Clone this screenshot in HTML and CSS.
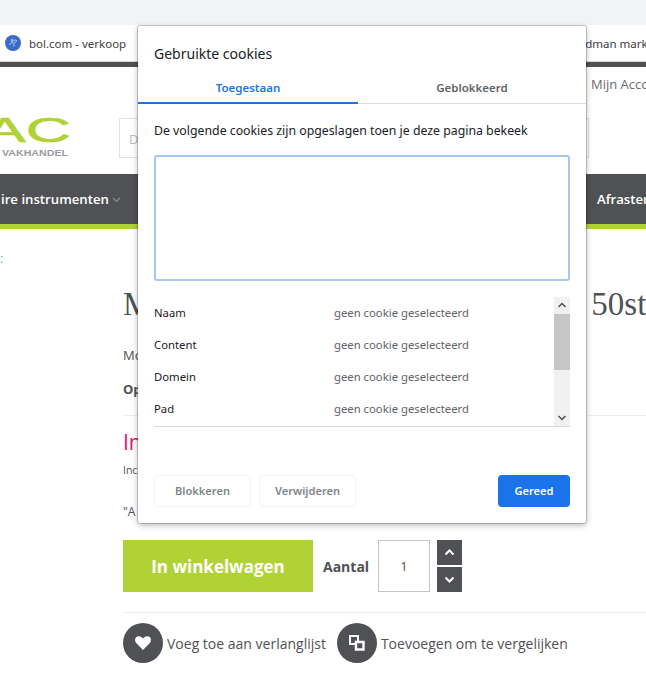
FILE: index.html
```html
<!DOCTYPE html>
<html lang="nl">
<head>
  <meta charset="UTF-8" />
  <meta name="viewport" content="width=device-width, initial-scale=1" />
  <title>Gebruikte cookies</title>
  <link rel="stylesheet" href="styles.css">
</head>
<body>

  <div class="browser-top"></div>

  <div class="bookmarks">
    <span class="bookmark-icon">
      <svg width="16" height="16" viewBox="0 0 16 16">
        <circle cx="8" cy="8" r="8" fill="#3a6bc9" />
        <path d="M4 9.500c2-.5 4-2.500 4-4.500 0-1-1.500-1-1.800 0C5.800 6.500 8 8 9 9.500c.6 1 0 2-1 1.800M8 6.500c1-1.500 3-2 3.500-1 .4 1-1 2-2.500 2.500" fill="none" stroke="#cfdcf5" stroke-width=".8" />
      </svg>
    </span>
    <span class="bookmark-name">bol.com - verkoop</span>
    <span class="bookmark-next">dman marketing</span>
  </div>
  <div class="dark-strip"></div>

  <header class="site-header">
    <div class="account">Mijn Account</div>
    <div class="header-row">
      <svg class="logo" width="74" height="44" viewBox="0 0 74 44">
        <text x="-16" y="25" class="logo-mark" textLength="87" lengthAdjust="spacingAndGlyphs">AC</text>
        <text x="2" y="39" class="logo-sub" textLength="66" lengthAdjust="spacingAndGlyphs">VAKHANDEL</text>
      </svg>
      <div class="search">D</div>
    </div>
  </header>

  <nav class="main-nav">
    <span class="nav-item">ire instrumenten
      <svg width="9" height="6" viewBox="0 0 9 6"><path d="M1 1l3.500 3.500L8 1" fill="none" stroke="#8c8d90" stroke-width="1.200" /></svg>
    </span>
    <span class="nav-item nav-last">Afrastering</span>
  </nav>

  <div class="crumbs">:</div>

  <main class="product">
    <h1 class="product-title"><span>M</span><span class="title-end">50st</span></h1>
    <p class="line-brand">Mo</p>
    <p class="line-option">Op</p>
    <hr class="rule rule-top">
    <p class="stock">In</p>
    <p class="stock-note">Inc</p>
    <p class="quote">"A</p>

    <div class="buy-row">
      <button class="cart-btn">In winkelwagen</button>
      <span class="qty-label">Aantal</span>
      <div class="qty-box">1</div>
      <div class="stepper">
        <button class="step-btn">
          <svg width="11" height="7" viewBox="0 0 11 7"><path d="M1.500 5.500l4-4 4 4" fill="none" stroke="#fff" stroke-width="2" /></svg>
        </button>
        <button class="step-btn">
          <svg width="11" height="7" viewBox="0 0 11 7"><path d="M1.500 1.500l4 4 4-4" fill="none" stroke="#fff" stroke-width="2" /></svg>
        </button>
      </div>
    </div>

    <hr class="rule rule-bottom">

    <div class="actions">
      <a class="action">
        <span class="action-icon">
          <svg width="16" height="14" viewBox="0 0 16 14"><path d="M8 14L1.400 7.300C-.4 5.400-.3 2.600 1.300 1.100 3 -.4 5.800-.2 8 2.400 10.200-.2 13-.4 14.700 1.100c1.600 1.500 1.700 4.300-.1 6.200z" fill="#fff" /></svg>
        </span>
        Voeg toe aan verlanglijst
      </a>
      <a class="action">
        <span class="action-icon">
          <svg width="16" height="16" viewBox="0 0 16 16">
            <path d="M1 1h8v8H1z" fill="none" stroke="#fff" stroke-width="2" />
            <path d="M6 6h9v9H6z" fill="#505155" />
            <path d="M7 7h7.500v7.500H7z" fill="none" stroke="#fff" stroke-width="2.400" />
          </svg>
        </span>
        Toevoegen om te vergelijken
      </a>
    </div>
  </main>

  <div class="dialog">
    <h2 class="dialog-title">Gebruikte cookies</h2>
    <div class="tabs">
      <div class="tab tab-active">Toegestaan</div>
      <div class="tab">Geblokkeerd</div>
    </div>
    <div class="dialog-body">
      <p class="intro">De volgende cookies zijn opgeslagen toen je deze pagina bekeek</p>
      <div class="cookie-tree"></div>
      <div class="details">
        <div class="details-rows">
          <div class="detail"><span class="detail-key">Naam</span><span class="detail-val">geen cookie geselecteerd</span></div>
          <div class="detail"><span class="detail-key">Content</span><span class="detail-val">geen cookie geselecteerd</span></div>
          <div class="detail"><span class="detail-key">Domein</span><span class="detail-val">geen cookie geselecteerd</span></div>
          <div class="detail"><span class="detail-key">Pad</span><span class="detail-val">geen cookie geselecteerd</span></div>
        </div>
        <div class="scrollbar">
          <svg class="scroll-arrow" width="16" height="17" viewBox="0 0 16 17"><path d="M4.500 10l3.500-3.500 3.500 3.500" fill="none" stroke="#505050" stroke-width="1.500" /></svg>
          <div class="scroll-thumb"></div>
          <div class="scroll-track"></div>
          <svg class="scroll-arrow" width="16" height="17" viewBox="0 0 16 17"><path d="M4.500 7l3.500 3.500L11.500 7" fill="none" stroke="#505050" stroke-width="1.500" /></svg>
        </div>
      </div>
      <div class="dialog-buttons">
        <button class="btn-plain">Blokkeren</button>
        <button class="btn-plain">Verwijderen</button>
        <button class="btn-done">Gereed</button>
      </div>
    </div>
  </div>

</body>
</html>
```

FILE: styles.css
```css
html, body {
  margin: 0;
  padding: 0;
}

body {
  position: relative;
  width: 646px;
  height: 676px;
  overflow: hidden;
  background: white;
  font-family: 'Open Sans', sans-serif;
  color: #505155;
}

p, h1, h2 {
  margin: 0;
  font-weight: normal;
}

button {
  font-family: inherit;
  cursor: pointer;
}

.browser-top {
  height: 25px;
  background: #f1f3f4;
}

.bookmarks {
  height: 36px;
  display: flex;
  align-items: center;
  padding-left: 5px;
  font-family: 'Noto Sans', sans-serif;
  font-size: 11.500px;
  color: #3c4043;
  white-space: nowrap;
  border-bottom: 1px solid #d6d6d6;
}

.bookmark-icon {
  display: flex;
  margin-right: 8px;
}

.bookmark-next {
  margin-left: 459px;
}

.dark-strip {
  height: 5px;
  background: #505155;
}

.site-header {
  height: 107px;
}

.account {
  padding: 8px 0 0 591px;
  font-size: 13px;
  line-height: 18px;
  white-space: nowrap;
  color: #6a6b6f;
}

.header-row {
  display: flex;
  align-items: flex-start;
  margin-top: 25px;
}

.logo {
  flex: none;
  margin-top: -1px;
  margin-right: 45px;
}

.logo-mark {
  font-family: 'Liberation Sans', sans-serif;
  font-size: 35px;
  fill: #b1d235;
  stroke: #b1d235;
  stroke-width: 0.6px;
}

.logo-sub {
  font-family: 'Liberation Sans', sans-serif;
  font-size: 9px;
  font-weight: 700;
  fill: #9a9b9e;
}

.search {
  width: 459px;
  height: 38px;
  padding-left: 9px;
  border: 1px solid #e2e2e2;
  font-size: 13px;
  line-height: 40px;
  color: #b9b9b9;
}

.main-nav {
  display: flex;
  align-items: center;
  justify-content: space-between;
  padding-left: 1px;
  padding-bottom: 1px;
  box-sizing: border-box;
  height: 55px;
  background: #505155;
  border-bottom: 5px solid #b1d235;
  color: white;
  font-size: 13.200px;
  font-weight: 600;
  white-space: nowrap;
}

.nav-item svg {
  vertical-align: 1px;
}

.nav-last {
  width: 49px;
  overflow: hidden;
}

.crumbs {
  height: 33px;
  padding-top: 22px;
  font-size: 12px;
  line-height: 16px;
  color: #4fb7b0;
}

.product {
  margin-left: 123px;
}

.product-title {
  display: flex;
  height: 40px;
  font-family: 'Liberation Serif', serif;
  font-size: 33px;
  line-height: 40px;
  white-space: nowrap;
  overflow: hidden;
}

.title-end {
  margin-left: 439px;
}

.line-brand {
  margin-top: 22px;
  font-size: 13px;
  line-height: 18px;
}

.line-option {
  margin-top: 16px;
  font-size: 13px;
  font-weight: 700;
  line-height: 18px;
}

.rule {
  height: 1px;
  margin: 0;
  border: none;
  background: #eeeeee;
}

.rule-top {
  margin-top: 17px;
}

.stock {
  margin-top: 11px;
  font-size: 21px;
  line-height: 30px;
  color: #e5126f;
}

.stock-note {
  margin-top: 6px;
  font-size: 10.500px;
  line-height: 14px;
}

.quote {
  margin-top: 27px;
  font-size: 12px;
  line-height: 16px;
}

.buy-row {
  display: flex;
  align-items: center;
  margin-top: 20px;
}

.cart-btn {
  width: 190px;
  height: 52px;
  border: none;
  background: #b1d235;
  color: white;
  font-size: 17px;
  font-weight: 700;
}

.qty-label {
  width: 55px;
  margin-left: 10px;
  font-size: 14px;
  font-weight: 700;
}

.qty-box {
  width: 50px;
  height: 50px;
  border: 1px solid #c4c4c4;
  font-size: 13px;
  line-height: 50px;
  text-align: center;
  color: #6b4a4d;
}

.stepper {
  display: flex;
  flex-direction: column;
  gap: 2px;
  margin-left: 7px;
}

.step-btn {
  width: 25px;
  height: 25px;
  padding: 0;
  display: flex;
  align-items: center;
  justify-content: center;
  border: none;
  background: #505155;
}

.rule-bottom {
  margin-top: 20px;
}

.actions {
  display: flex;
  gap: 11px;
  margin-top: 10px;
}

.action {
  display: flex;
  align-items: center;
  gap: 4px;
  font-size: 14px;
  white-space: nowrap;
}

.action-icon {
  width: 40px;
  height: 40px;
  flex: none;
  display: flex;
  align-items: center;
  justify-content: center;
  border-radius: 50%;
  background: #505155;
}

/* chrome cookie dialog, sits on top of the page */
.dialog {
  position: absolute;
  left: 138px;
  top: 26px;
  width: 448px;
  height: 497px;
  background: white;
  border-radius: 2px;
  box-shadow: 0 0 0 1px rgba(0,0,0,0.18), 0 2px 6px rgba(0,0,0,0.3);
  font-family: 'Noto Sans', sans-serif;
  font-size: 12.300px;
  color: #202124;
}

.dialog-title {
  padding: 18px 16px 0;
  font-size: 14px;
  line-height: 20px;
}

.tabs {
  display: flex;
  margin-top: 7px;
  border-bottom: 1px solid #dadce0;
}

.tab {
  flex: 1;
  height: 32px;
  line-height: 24px;
  padding-top: 5px;
  box-sizing: border-box;
  text-align: center;
  font-size: 11.500px;
  font-weight: 600;
  color: #5f6368;
}

.tab-active {
  flex: none;
  width: 220px;
  color: #1a73e8;
  border-bottom: 2px solid #1a73e8;
  margin-bottom: -1px;
  height: 33px;
}

.dialog-body {
  padding: 18px 16px 0;
}

.intro {
  line-height: 18px;
}

.cookie-tree {
  height: 122px;
  margin-top: 15px;
  border: 2px solid #a8c7f0;
  border-radius: 3px;
}

.details {
  display: flex;
  height: 129px;
  margin-top: 16px;
  border-bottom: 1px solid #dadce0;
  font-size: 11.300px;
}

.details-rows {
  flex: 1;
}

.detail {
  display: flex;
  height: 32px;
  box-sizing: border-box;
  padding-bottom: 2px;
  align-items: center;
}

.detail-key {
  width: 180px;
}

.detail-val {
  color: #5f6368;
}

.scrollbar {
  width: 16px;
  display: flex;
  flex-direction: column;
  background: #f1f1f1;
}

.scroll-arrow {
  flex: none;
}

.scroll-thumb {
  height: 56px;
  background: #c6c6c6;
}

.scroll-track {
  flex: 1;
}

.dialog-buttons {
  display: flex;
  gap: 8px;
  margin-top: 48px;
}

.dialog-buttons button {
  height: 32px;
  padding: 0 0 2px;
  border-radius: 4px;
  font-family: inherit;
  font-size: 11.100px;
  font-weight: 600;
}

.btn-plain {
  width: 97px;
  background: white;
  border: 1px solid #f1f3f4;
  color: #80868b;
}

.btn-done {
  width: 72px;
  margin-left: auto;
  background: #1a73e8;
  border: none;
  color: white;
}
```
